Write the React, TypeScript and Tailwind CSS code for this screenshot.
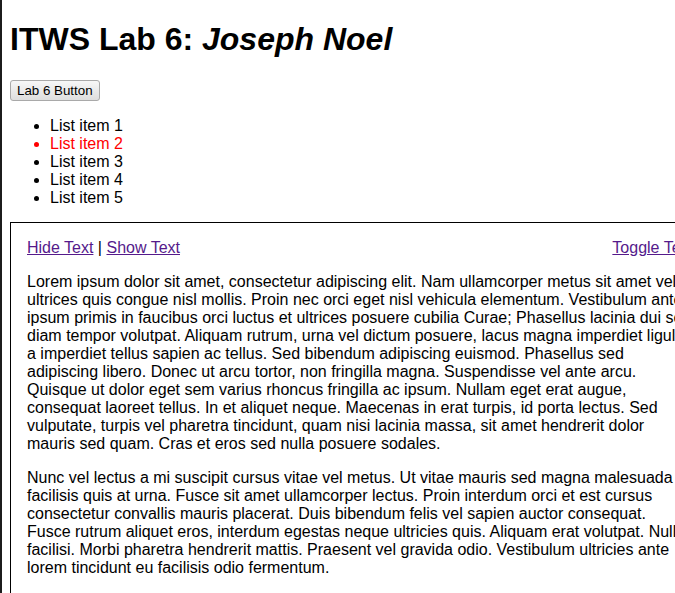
import * as React from "react";

const PARA_ONE =
  "Lorem ipsum dolor sit amet, consectetur adipiscing elit. Nam ullamcorper metus sit amet velit ultrices quis congue nisl mollis. Proin nec orci eget nisl vehicula elementum. Vestibulum ante ipsum primis in faucibus orci luctus et ultrices posuere cubilia Curae; Phasellus lacinia dui sed diam tempor volutpat. Aliquam rutrum, urna vel dictum posuere, lacus magna imperdiet ligula, a imperdiet tellus sapien ac tellus. Sed bibendum adipiscing euismod. Phasellus sed adipiscing libero. Donec ut arcu tortor, non fringilla magna. Suspendisse vel ante arcu. Quisque ut dolor eget sem varius rhoncus fringilla ac ipsum. Nullam eget erat augue, consequat laoreet tellus. In et aliquet neque. Maecenas in erat turpis, id porta lectus. Sed vulputate, turpis vel pharetra tincidunt, quam nisi lacinia massa, sit amet hendrerit dolor mauris sed quam. Cras et eros sed nulla posuere sodales.";

const PARA_TWO =
  "Nunc vel lectus a mi suscipit cursus vitae vel metus. Ut vitae mauris sed magna malesuada facilisis quis at urna. Fusce sit amet ullamcorper lectus. Proin interdum orci et est cursus consectetur convallis mauris placerat. Duis bibendum felis vel sapien auctor consequat. Fusce rutrum aliquet eros, interdum egestas neque ultricies quis. Aliquam erat volutpat. Nulla facilisi. Morbi pharetra hendrerit mattis. Praesent vel gravida odio. Vestibulum ultricies ante lorem tincidunt eu facilisis odio fermentum.";

const ITEMS = ["List item 1", "List item 2", "List item 3", "List item 4", "List item 5"];

export default function App() {
  const [hidden, setHidden] = React.useState(false);

  return (
    <div className="h-screen overflow-hidden border-l-2 border-[#1c1c1c] bg-white pl-2 font-['Liberation_Sans',Arial,sans-serif] text-black">
      <h1 className="mb-[22px] pt-[21px] text-[32px] leading-[37px] font-bold">
        ITWS Lab 6: <em>Joseph Noel</em>
      </h1>

      <div className="flex">
        <button
          type="button"
          className="h-[21px] rounded-[3px] border border-[#a9a9a9] bg-gradient-to-b from-[#f7f7f7] to-[#dedede] px-[6px] text-[13.33px] leading-[19px]"
        >
          Lab 6 Button
        </button>
      </div>

      <ul className="mt-4 mb-[15px] list-disc pl-10 text-base leading-[18px]">
        {ITEMS.map((item, i) => (
          <li key={item} className={i === 1 ? "text-[#ff0000]" : undefined}>
            {item}
          </li>
        ))}
      </ul>

      <div className="w-[700px] border border-black p-4 text-base leading-[18px]">
        <div className="flex justify-between">
          <span>
            <a href="#" onClick={() => setHidden(true)} className="text-[#551a8b] underline">
              Hide Text
            </a>{" "}
            |{" "}
            <a href="#" onClick={() => setHidden(false)} className="text-[#551a8b] underline">
              Show Text
            </a>
          </span>
          <a href="#" onClick={() => setHidden((h) => !h)} className="text-[#551a8b] underline">
            Toggle Text
          </a>
        </div>
        {!hidden && (
          <>
            <p className="my-4">{PARA_ONE}</p>
            <p className="my-4">{PARA_TWO}</p>
          </>
        )}
      </div>
    </div>
  );
}
